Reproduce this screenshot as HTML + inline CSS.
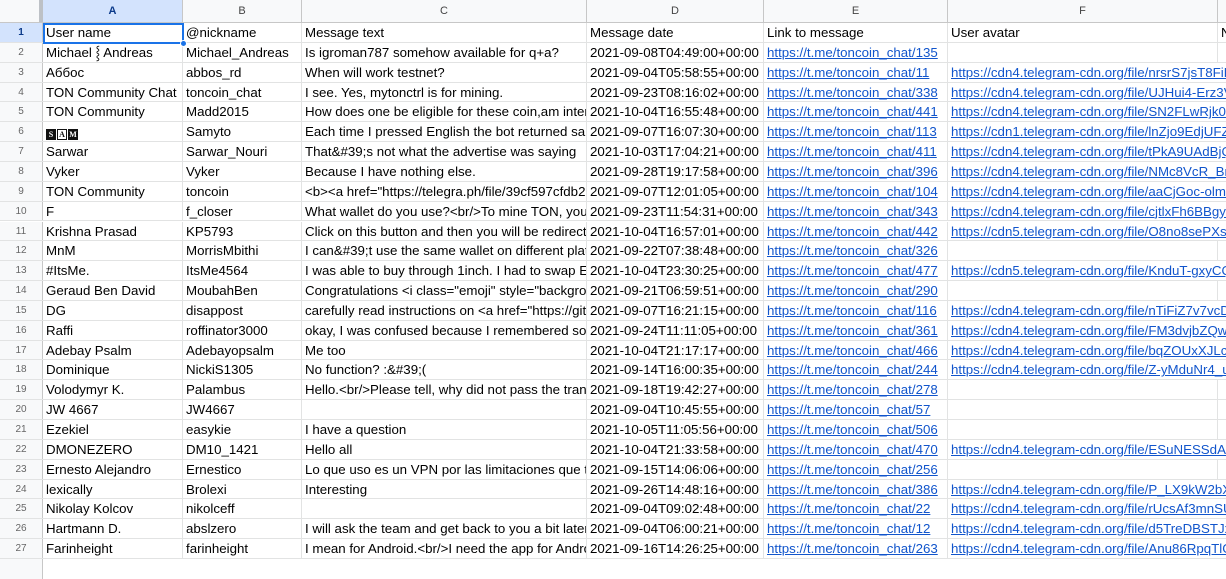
<!DOCTYPE html><html><head><meta charset="utf-8"><style>
*{margin:0;padding:0;box-sizing:border-box}
body{width:1226px;height:564px;overflow:hidden;background:#fff;font-family:"Liberation Sans",Arial,sans-serif;font-size:13.3px;color:#000;position:relative}
.r{position:absolute;left:0;width:1226px;height:19.85px;border-bottom:1px solid #e2e3e3}
.c{position:absolute;top:0;height:100%;line-height:20px;padding-left:3px;white-space:nowrap;overflow:hidden;border-right:1px solid #e2e3e3}
.n{left:0;width:43px;background:#f8f9fa;color:#666;font-size:10px;text-align:center;padding:0;border-right:1px solid #c7c7c7}
.a{left:43px;width:140px}.b{left:183px;width:119px}.cc{left:302px;width:285px}.d{left:587px;width:177px}.e{left:764px;width:184px}.f{left:948px;width:270px}.g{left:1218px;width:20px}
.f.o{overflow:visible;border-right:none;z-index:2;background:#fff;width:278px}
a{color:#1155cc;text-decoration:underline}
.h{position:absolute;top:0;left:0;width:1226px;height:23px;background:#f8f9fa;border-bottom:1px solid #c7c7c7}
.h .c{line-height:23px;text-align:center;color:#444;font-size:11px;padding:0;border-right:1px solid #c7c7c7}
.sq{display:inline-block;width:10px;height:11px;font-size:8px;line-height:11px;text-align:center;vertical-align:-1px;margin-right:1px;font-family:"Liberation Serif",serif;font-weight:bold}
.sq.k{background:#111;color:#fff}.sq.w{border:1px solid #111;color:#111;line-height:9px}
</style></head><body>
<div class="h">
<div class="c n" style="border-right:4px solid #bdc1c6;background:#f8f9fa"></div>
<div class="c a" style="background:#d3e3fd;color:#0b3a8a;font-weight:bold">A</div>
<div class="c b">B</div><div class="c cc">C</div><div class="c d">D</div><div class="c e">E</div><div class="c f">F</div><div class="c g"></div>
</div>
<div id="rows"></div>
<div style="position:absolute;left:43px;top:23px;width:141px;height:21px;border:2px solid #1a73e8;z-index:5"></div>
<div style="position:absolute;left:180px;top:40px;width:7px;height:7px;border-radius:50%;background:#1a73e8;border:1px solid #fff;z-index:6"></div>
<script>
var d=[
["User name","@nickname","Message text","Message date","Link to message","User avatar"],
["Michael ⸾ Andreas","Michael_Andreas","Is igroman787 somehow available for q+a?","2021-09-08T04:49:00+00:00","135",""],
["Аббос","abbos_rd","When will work testnet?","2021-09-04T05:58:55+00:00","11","cdn4|nrsrS7jsT8FiHdQx"],
["TON Community Chat","toncoin_chat","I see. Yes, mytonctrl is for mining.","2021-09-23T08:16:02+00:00","338","cdn4|UJHui4-Erz3V3abc"],
["TON Community","Madd2015","How does one be eligible for these coin,am interested","2021-10-04T16:55:48+00:00","441","cdn4|SN2FLwRjk0UPq"],
['<span class="sq k">S</span><span class="sq w">A</span><span class="sq k">M</span>',"Samyto","Each time I pressed English the bot returned same","2021-09-07T16:07:30+00:00","113","cdn1|lnZjo9EdjUFZ_hA"],
["Sarwar","Sarwar_Nouri","That&amp;#39;s not what the advertise was saying","2021-10-03T17:04:21+00:00","411","cdn4|tPkA9UAdBjQDx"],
["Vyker","Vyker","Because I have nothing else.","2021-09-28T19:17:58+00:00","396","cdn4|NMc8VcR_Bm1x"],
["TON Community","toncoin","&lt;b&gt;&lt;a href=\"https://telegra.ph/file/39cf597cfdb2bc","2021-09-07T12:01:05+00:00","104","cdn4|aaCjGoc-olmsAx"],
["F","f_closer","What wallet do you use?&lt;br/&gt;To mine TON, you need","2021-09-23T11:54:31+00:00","343","cdn4|cjtlxFh6BBgyUd"],
["Krishna Prasad","KP5793","Click on this button and then you will be redirected","2021-10-04T16:57:01+00:00","442","cdn5|O8no8sePXsT5x"],
["MnM","MorrisMbithi","I can&amp;#39;t use the same wallet on different platforms","2021-09-22T07:38:48+00:00","326",""],
["#ItsMe.","ItsMe4564","I was able to buy through 1inch. I had to swap ETH","2021-10-04T23:30:25+00:00","477","cdn5|KnduT-gxyCQCx"],
["Geraud Ben David","MoubahBen","Congratulations &lt;i class=\"emoji\" style=\"background","2021-09-21T06:59:51+00:00","290",""],
["DG","disappost","carefully read instructions on &lt;a href=\"https://github","2021-09-07T16:21:15+00:00","116","cdn4|nTiFiZ7v7vcDXx"],
["Raffi","roffinator3000","okay, I was confused because I remembered some","2021-09-24T11:11:05+00:00","361","cdn4|FM3dvjbZQwDx"],
["Adebay Psalm","Adebayopsalm","Me too","2021-10-04T21:17:17+00:00","466","cdn4|bqZOUxXJLcqx"],
["Dominique","NickiS1305","No function? :&amp;#39;(","2021-09-14T16:00:35+00:00","244","cdn4|Z-yMduNr4_u h"],
["Volodymyr K.","Palambus","Hello.&lt;br/&gt;Please tell, why did not pass the transaction","2021-09-18T19:42:27+00:00","278",""],
["JW 4667","JW4667","","2021-09-04T10:45:55+00:00","57",""],
["Ezekiel","easykie","I have a question","2021-10-05T11:05:56+00:00","506",""],
["DMONEZERO","DM10_1421","Hello all","2021-10-04T21:33:58+00:00","470","cdn4|ESuNESSdA7Cx"],
["Ernesto Alejandro","Ernestico","Lo que uso es un VPN por las limitaciones que tengo","2021-09-15T14:06:06+00:00","256",""],
["lexically","Brolexi","Interesting","2021-09-26T14:48:16+00:00","386","cdn4|P_LX9kW2bXFx"],
["Nikolay Kolcov","nikolceff","","2021-09-04T09:02:48+00:00","22","cdn4|rUcsAf3mnSUFx"],
["Hartmann D.","abslzero","I will ask the team and get back to you a bit later.","2021-09-04T06:00:21+00:00","12","cdn4|d5TreDBSTJx1x"],
["Farinheight","farinheight","I mean for Android.&lt;br/&gt;I need the app for Android","2021-09-16T14:26:25+00:00","263","cdn4|Anu86RpqTlGAx"]];
var h="";
for(var i=0;i<d.length;i++){var r=d[i],t=23+i*19.85;
var nb=i==0?'background:#d3e3fd;color:#0b3a8a;font-weight:bold;':'';
h+='<div class="r" style="top:'+t+'px">';
h+='<div class="c n" style="'+nb+'">'+(i+1)+'</div>';
h+='<div class="c a">'+r[0]+'</div><div class="c b">'+r[1]+'</div><div class="c cc">'+r[2]+'</div><div class="c d">'+r[3]+'</div>';
if(i==0){h+='<div class="c e">'+r[4]+'</div><div class="c f">'+r[5]+'</div><div class="c g">N</div>';}
else{h+='<div class="c e"><a>https://t.me/toncoin_chat/'+r[4]+'</a></div>';
if(r[5]){var p=r[5].split("|");h+='<div class="c f o"><a>https://'+p[0]+'.telegram-cdn.org/file/'+p[1]+'</a></div>';}
else h+='<div class="c f"></div><div class="c g"></div>';}
h+='</div>';}
h+='<div class="r" style="top:'+(23+27*19.85)+'px;border:none"><div class="c n"></div></div>';
document.getElementById("rows").innerHTML=h;
</script>
</body></html>
